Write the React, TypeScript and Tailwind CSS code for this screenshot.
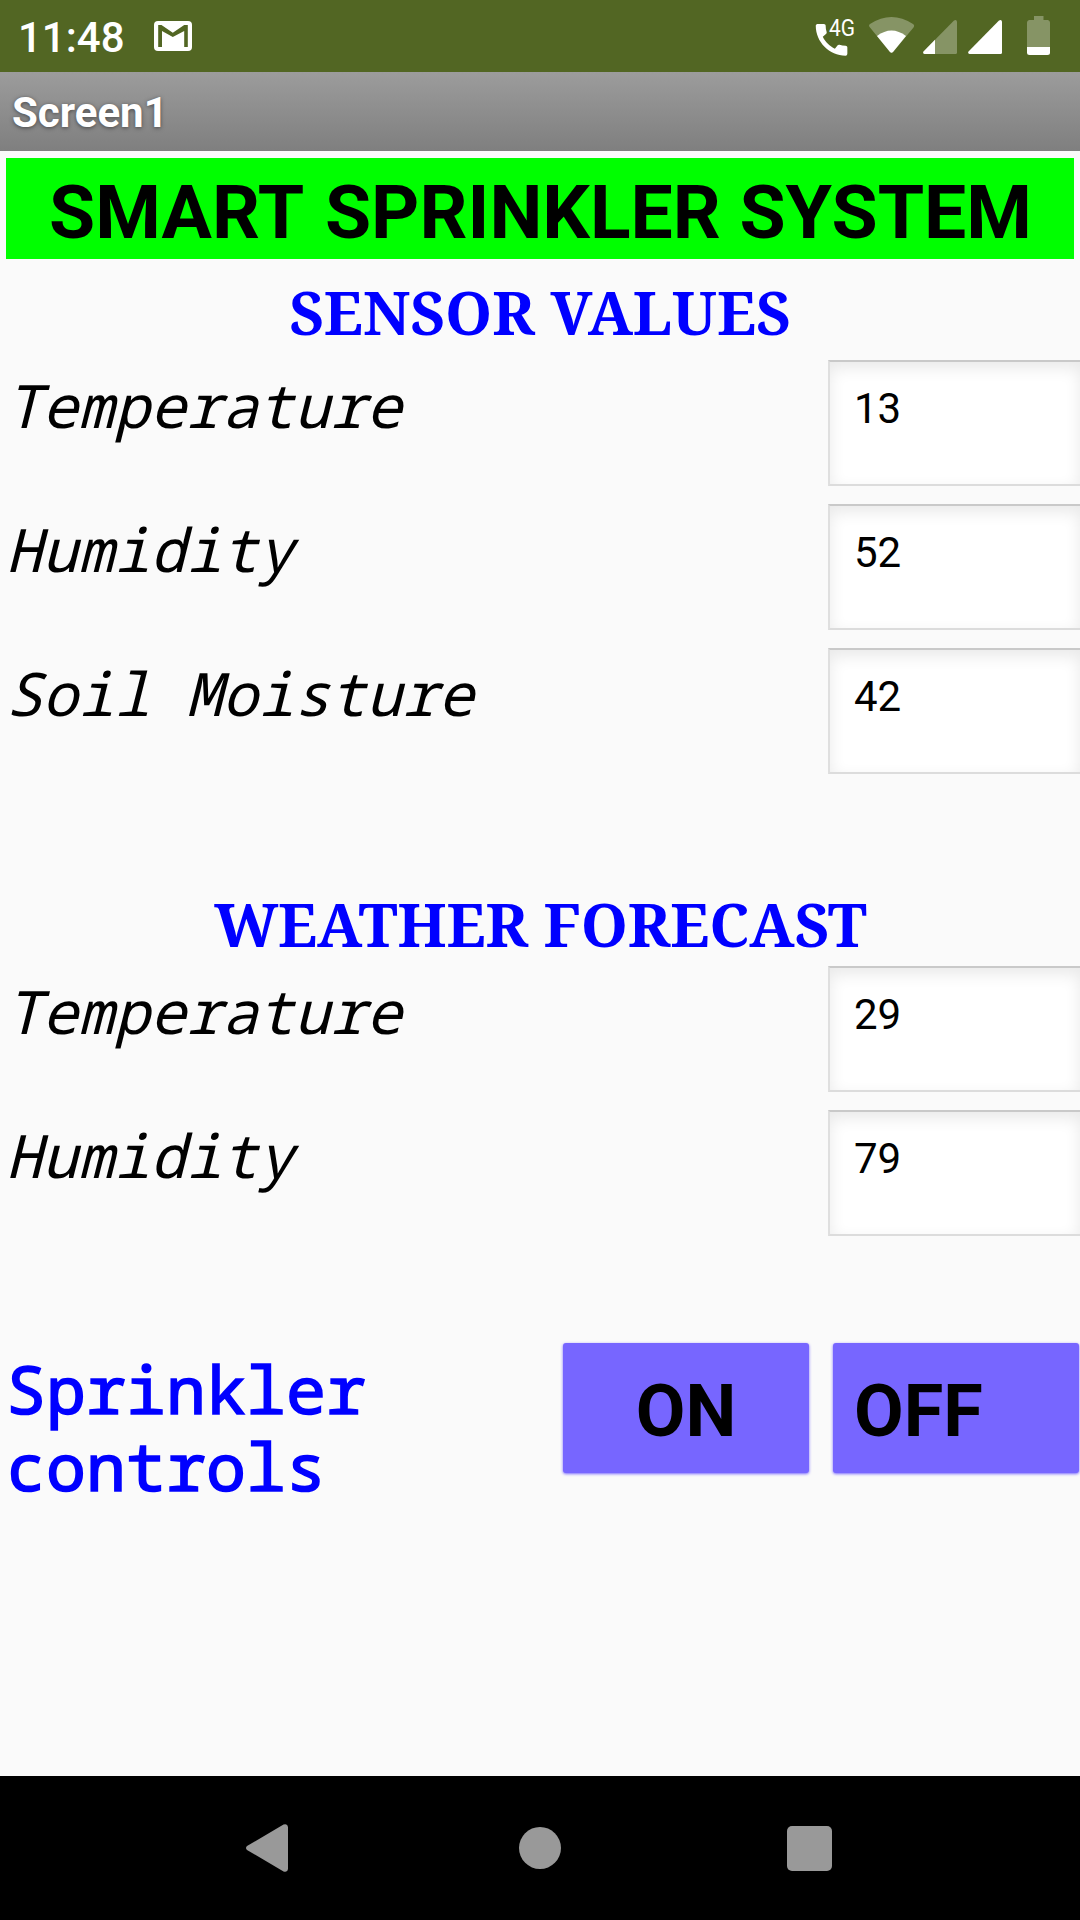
import React from "react";

const ROBOTO = "font-[Roboto,sans-serif]";
const MONO = "font-['Droid_Sans_Mono','Noto_Sans_Mono','DejaVu_Sans_Mono',monospace]";
const SERIF = "font-['Noto_Serif','Liberation_Serif',serif]";

function StatusBar() {
  return (
    <header className="flex h-[72px] items-start bg-[#526623] text-white">
      <span className={`${ROBOTO} ml-[18px] w-[136px] text-[42px] font-medium leading-[76px]`}>11:48</span>
      <svg className="h-[72px] w-[38px]" viewBox="154 0 38 72">
        <rect x="154" y="21" width="38" height="30" rx="4" fill="#fff" />
        <path d="M158.200 47V25H161.500L172.800 32.800L184.200 25H187.800V47H184.200V31L172.800 37L162 31V47Z" fill="#526623" />
      </svg>
      <svg className="ml-auto h-[72px] w-[46px]" viewBox="815 0 46 72">
        <path
          transform="translate(810.500 18.800) scale(1.755)"
          d="M20.010 15.380c-1.230 0-2.420-.200-3.530-.560-.350-.120-.740-.030-1.010.240l-1.570 1.970c-2.830-1.350-5.480-3.900-6.890-6.830l1.950-1.660c.270-.280.350-.670.240-1.020-.370-1.110-.560-2.300-.560-3.530 0-.540-.450-.990-.990-.990H4.190C3.650 3 3 3.240 3 3.990 3 13.280 10.730 21 20.010 21c.710 0 .990-.630.990-1.180v-3.450c0-.540-.450-.990-.990-.990z"
          fill="#fff"
        />
        <text x="829" y="36" fontSize="24" textLength="26" lengthAdjust="spacingAndGlyphs" fill="#fff" fontFamily="Roboto, sans-serif">
          4G
        </text>
      </svg>
      <svg className="ml-[7px] h-[72px] w-[47px]" viewBox="868 0 47 72" fill="#fff">
        <path d="M870 27.500Q868 25.500 870 24Q891.500 10 913 24Q915 25.500 913.500 27.500L893 52Q891.500 53.500 890 52Z" fillOpacity=".3" />
        <path d="M877 36Q891.500 25 906 36L893 52Q891.500 53.500 890 52Z" />
      </svg>
      <svg className="ml-[8px] h-[72px] w-[34px]" viewBox="923 0 34 72" fill="#fff">
        <path d="M923.500 51.500L954 20.500Q956.500 19 957 21.500V52.500Q957 54 955.500 54H924.500Q922.500 53.500 923.500 51.500Z" fillOpacity=".3" />
        <path d="M923.500 51.500L935 39.800V54H924.500Q922.500 53.500 923.500 51.500Z" />
      </svg>
      <svg className="ml-[11px] h-[72px] w-[34px]" viewBox="923 0 34 72" fill="#fff">
        <path d="M923.500 51.500L954 20.500Q956.500 19 957 21.500V52.500Q957 54 955.500 54H924.500Q922.500 53.500 923.500 51.500Z" />
      </svg>
      <svg className="ml-[25px] mr-[30px] h-[72px] w-[23px]" viewBox="1027 0 23 72" fill="#fff">
        <path d="M1034 16H1043.500V20H1048Q1050 20.500 1050 22.500V47H1027V22.500Q1027 20.500 1029 20H1034Z" fillOpacity=".3" />
        <path d="M1027 47H1050V52.500Q1050 55 1047.500 55H1029.500Q1027 55 1027 52.500Z" />
      </svg>
    </header>
  );
}

function Heading({ children, className }: { children: React.ReactNode; className: string }) {
  return (
    <h2 className={`${SERIF} whitespace-nowrap text-center text-[60px] font-bold text-[#0000ff] ${className}`}>
      {children}
    </h2>
  );
}

function Reading({ label, value }: { label: string; value: string }) {
  return (
    <div className="flex h-[144px] items-start">
      <span className={`${MONO} w-[828px] shrink-0 whitespace-pre pl-[6px] text-[60px] italic leading-[90px] text-black`}>{label}</span>
      <div
        className={`${ROBOTO} h-[126px] w-[254px] shrink-0 border-2 border-b-[#dcdcdc] border-l-[#dfdfdf] border-r-[#dfdfdf] border-t-[#c9c9c9] bg-white pl-[24px] text-[42px] leading-[93px] text-black shadow-[inset_0_6px_16px_rgba(0,0,0,0.09)]`}
      >
        {value}
      </div>
    </div>
  );
}

export default function App() {
  return (
    <div className="flex h-[1920px] w-[1080px] flex-col overflow-hidden bg-[#fafafa]">
      <StatusBar />
      <div
        className={`${ROBOTO} h-[79px] bg-linear-to-b from-[#9c9c9c] to-[#7f7f7f] pl-[12px] text-[42px] font-bold leading-[81px] text-white [text-shadow:0_1px_4px_rgba(0,0,0,0.5)]`}
      >
        Screen1
      </div>
      <main className="flex flex-1 flex-col">
        <h1 className={`${ROBOTO} mx-[6px] mt-[7px] h-[101px] whitespace-nowrap bg-[#00ff00] pl-px text-center text-[75px] font-bold leading-[109px] text-black`}>
          <span className="mr-[2px]">SMART</span> SPRINKLER SYSTEM
        </h1>
        <Heading className="h-[101px] leading-[107px]">SENSOR VALUES</Heading>
        <Reading label="Temperature" value="13" />
        <Reading label="Humidity" value="52" />
        <Reading label="Soil Moisture" value="42" />
        <Heading className="mt-[72px] h-[102px] pl-px leading-[121px] tracking-[-0.15px]">WEATHER FORECAST</Heading>
        <Reading label="Temperature" value="29" />
        <Reading label="Humidity" value="79" />
        <div className="mt-[89px] flex items-start">
          <p className={`${MONO} mt-[7px] w-[563px] shrink-0 pl-[6px] pr-[120px] text-[66.5px] leading-[77px] tracking-[0.1px] text-[#0000ff] [-webkit-text-stroke:1.7px_#0000ff]`}>
            Sprinkler controls
          </p>
          <button className={`${ROBOTO} h-[130px] w-[246px] shrink-0 rounded-[3px] bg-[#7766ff] text-center text-[72px] font-bold leading-[137px] text-black shadow-[0_1px_3px_#7766ff]`}>
            ON
          </button>
          <button className={`${ROBOTO} ml-[24px] h-[130px] w-[246px] shrink-0 rounded-[3px] bg-[#7766ff] pl-[21px] text-left text-[72px] font-bold leading-[137px] text-black shadow-[0_1px_3px_#7766ff]`}>
            OFF
          </button>
        </div>
      </main>
      <nav className="flex h-[144px] items-center bg-black">
        <svg className="ml-[246px] h-[48px] w-[42px]" viewBox="0 0 42 48" fill="#999">
          <path d="M1 22L37.500 .600Q41.500-.800 42 3V45Q41.500 48.800 37.500 47.400L1 26Q-1 24 1 22Z" />
        </svg>
        <div className="ml-[231px] h-[42px] w-[42px] rounded-full bg-[#999999]" />
        <div className="ml-[226px] h-[45px] w-[45px] rounded-[5px] bg-[#999999]" />
      </nav>
    </div>
  );
}
